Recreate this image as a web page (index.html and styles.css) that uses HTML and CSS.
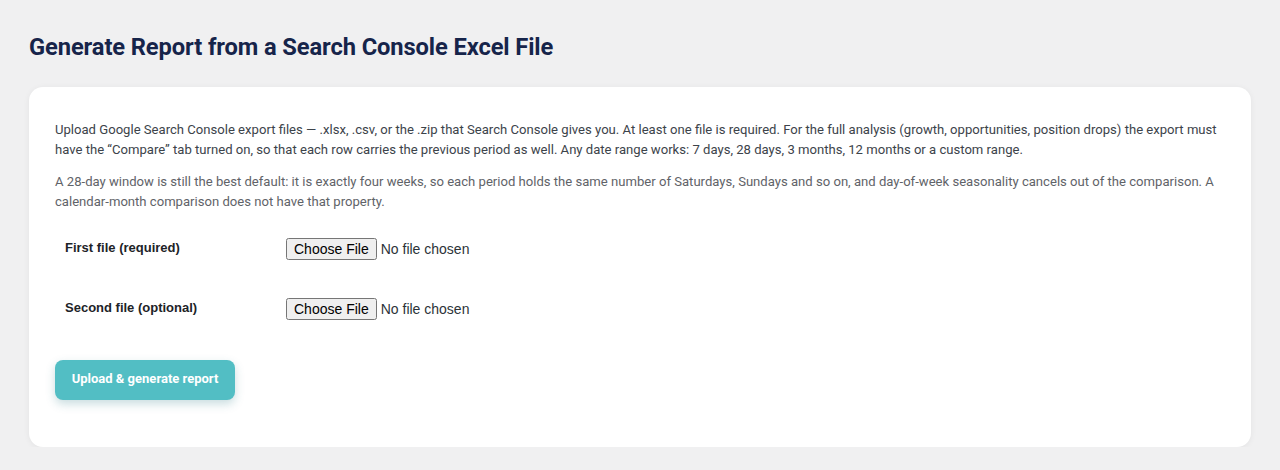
FILE: index.html
```html
<!DOCTYPE html>
<html lang="en">
<head>
<meta charset="utf-8">
<title>Generate Report</title>
<link rel="stylesheet" href="styles.css">
</head>
<body>
<div class="wrap">
  <h1 class="title">Generate Report from a Search Console Excel File</h1>
  <div class="card">
    <p class="intro">Upload Google Search Console export files — .xlsx, .csv, or the .zip that Search Console gives you. At least one file is required. For the full analysis (growth, opportunities, position drops) the export must have the “Compare” tab turned on, so that each row carries the previous period as well. Any date range works: 7 days, 28 days, 3 months, 12 months or a custom range.</p>
    <p class="note">A 28-day window is still the best default: it is exactly four weeks, so each period holds the same number of Saturdays, Sundays and so on, and day-of-week seasonality cancels out of the comparison. A calendar-month comparison does not have that property.</p>
    <form class="form">
      <div class="row">
        <label class="label" for="f1">First file (required)</label>
        <input class="file" id="f1" type="file">
      </div>
      <div class="row">
        <label class="label" for="f2">Second file (optional)</label>
        <input class="file" id="f2" type="file">
      </div>
      <button class="submit" type="button">Upload &amp; generate report</button>
    </form>
  </div>
</div>
</body>
</html>
```
FILE: styles.css
```css
html, body {
  margin: 0;
  padding: 0;
  background: #f0f0f1;
}
.wrap {
  padding: 32px 29px 0 29px;
}
.title {
  margin: 0 0 25px 0;
  font-family: Roboto, "Liberation Sans", sans-serif;
  font-weight: 700;
  font-size: 23.7px;
  line-height: 30px;
  color: #16244a;
  letter-spacing: -0.1px;
}
.card {
  background: #ffffff;
  border-radius: 14px;
  box-shadow: 0 1px 6px rgba(0, 0, 0, 0.06);
  padding: 33px 26px 47px 26px;
}
.intro, .note {
  margin: 0;
  font-family: Roboto, "Liberation Sans", sans-serif;
  font-size: 13.1px;
  line-height: 20px;
}
.intro {
  color: #3c434a;
  margin-bottom: 12px;
}
.note {
  color: #5f6368;
}
.form {
  display: flex;
  flex-direction: column;
  align-items: flex-start;
  margin-top: 17px;
}
.row {
  display: flex;
  align-items: center;
  height: 40px;
  margin-bottom: 20px;
  padding-left: 10px;
}
.label {
  width: 221px;
  font-family: "Liberation Sans", Arial, sans-serif;
  font-weight: 700;
  font-size: 13px;
  color: #1d2327;
  margin-top: -4px;
}
.file {
  font-family: "Liberation Sans", Arial, sans-serif;
  font-size: 14px;
  color: #2c3338;
}
.submit {
  margin-top: 11px;
  width: 180px;
  height: 40px;
  border: none;
  border-radius: 8px;
  background: #52bec4;
  color: #ffffff;
  font-family: Roboto, "Liberation Sans", sans-serif;
  font-weight: 700;
  font-size: 13px;
  box-shadow: 0 4px 10px rgba(40, 120, 130, 0.25);
  padding: 0 0 4px 0;
  cursor: pointer;
}
```
